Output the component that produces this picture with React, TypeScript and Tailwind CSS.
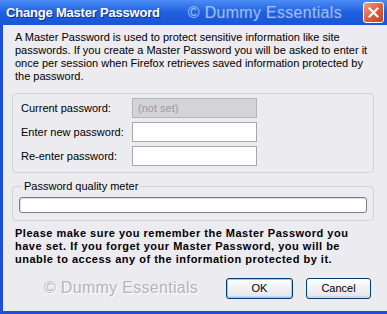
export default function App() {
  const rows = [
    { label: 'Current password:', value: '(not set)', disabled: true },
    { label: 'Enter new password:', value: '', disabled: false },
    { label: 'Re-enter password:', value: '', disabled: false },
  ];

  return (
    <div className="w-[387px] h-[314px] flex flex-col overflow-hidden bg-[#ecebf0] font-['Liberation_Sans',Arial,sans-serif] text-[11px] text-black">
      {/* title bar */}
      <div className="h-[25px] shrink-0 flex items-center pl-[6px] pr-[3px] bg-gradient-to-b from-[#4b8cf5] via-[#1f5fe0] to-[#1a56d6]">
        <span className="text-white font-bold text-[13px] tracking-[-0.2px] [text-shadow:1px_1px_0_#0a2f8c]">
          Change Master Password
        </span>
        <span className="ml-[28px] text-[16px] text-white/35 tracking-[0.3px] [text-shadow:0_0_1px_#7aa6ee]">
          © Dummy Essentials
        </span>
        <button className="ml-auto w-[21px] h-[21px] rounded-[3px] border border-white bg-gradient-to-br from-[#f0a088] via-[#e0603c] to-[#c8401c] flex items-center justify-center">
          <svg width="11" height="11" viewBox="0 0 11 11">
            <path d="M1.5 1.5 L9.5 9.5 M9.5 1.5 L1.5 9.5" stroke="white" strokeWidth="2.2" strokeLinecap="square" />
          </svg>
        </button>
      </div>

      {/* body */}
      <div className="flex-1 flex flex-col border-l-[3px] border-b-[3px] border-[#1d50d6] pl-[9px] pr-[13px] pt-[6px]">
        <p className="px-[3px] leading-[13px]">
          A Master Password is used to protect sensitive information like site passwords. If you create a Master
          Password you will be asked to enter it once per session when Firefox retrieves saved information
          protected by the password.
        </p>

        <div className="mt-[10px] h-[80px] rounded-[4px] border border-[#d4d2d6] pl-[8px] pt-[4px] flex flex-col gap-[4px]">
          {rows.map((r) => (
            <div key={r.label} className="flex items-center h-[20px]">
              <span className="w-[111px]">{r.label}</span>
              <div
                className={`w-[125px] h-[20px] border px-[5px] flex items-center ${
                  r.disabled ? 'bg-[#d4d3d8] border-[#b3b3b8] text-[#9c9ca4]' : 'bg-white border-[#a8a8ae]'
                }`}
              >
                {r.value}
              </div>
            </div>
          ))}
        </div>

        <fieldset className="mt-[7px] rounded-[4px] border border-[#d4d2d6] px-[6px] pb-[7px] pt-[4px]">
          <legend className="ml-[3px] px-[2px] leading-[13px]">Password quality meter</legend>
          <div className="h-[16px] rounded-[3px] border border-[#7e7e7e] bg-white shadow-[inset_1px_1px_0_#e0e0e0]" />
        </fieldset>

        <p className="mt-[6px] px-[3px] w-[342px] font-bold leading-[13px] tracking-[0.5px]">
          Please make sure you remember the Master Password you have set. If you forget your Master Password, you
          will be unable to access any of the information protected by it.
        </p>

        <div className="mt-[10px] flex items-center">
          <span className="ml-[32px] text-[16px] text-[#b4b4b8] tracking-[0.3px] [text-shadow:1px_1px_0_#ffffff]">
            © Dummy Essentials
          </span>
          <button className="ml-auto w-[67px] h-[21px] rounded-[3px] border border-[#003c74] bg-gradient-to-b from-white to-[#e3e3ea] shadow-[inset_0_0_0_1px_#a8c4f0,inset_0_-2px_0_#c4d6f4]">
            OK
          </button>
          <button className="ml-[13px] mr-[3px] w-[65px] h-[21px] rounded-[3px] border border-[#003c74] bg-gradient-to-b from-white to-[#e3e3ea] shadow-[inset_0_-2px_0_#d6d6de]">
            Cancel
          </button>
        </div>
      </div>
    </div>
  );
}
